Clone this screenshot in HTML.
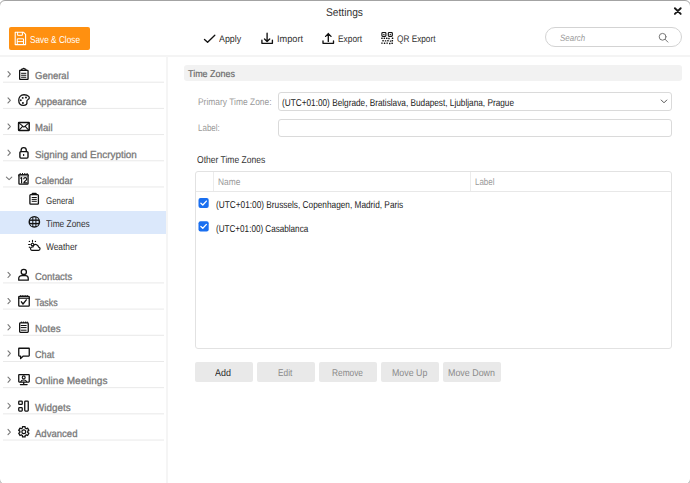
<!DOCTYPE html>
<html><head><meta charset="utf-8"><style>
html,body{margin:0;padding:0;}
body{width:690px;height:483px;position:relative;overflow:hidden;background:#fff;font-family:"Liberation Sans",sans-serif;text-rendering:geometricPrecision;}
.t{position:absolute;white-space:nowrap;line-height:1;transform-origin:0 0;}
.r{position:absolute;}
.ov{position:absolute;left:0;top:0;}
</style></head><body>
<div class="r" style="left:-1px;top:0px;width:692px;height:485px;border:1px solid #a3a3a3;border-radius:6px;box-sizing:border-box;"></div>
<div class="t" style="left:326.00px;top:8px;font-size:11.2px;color:#333;transform:scaleX(0.9143);">Settings</div>
<div class="r" style="left:9px;top:27px;width:81px;height:23px;background:#ff9010;border-radius:2px;"></div>
<div class="t" style="left:29.70px;top:36px;font-size:10px;color:#fff;transform:scaleX(0.8253);">Save &amp; Close</div>
<div class="t" style="left:219.30px;top:35px;font-size:9.6px;color:#333;transform:scaleX(0.9245);">Apply</div>
<div class="t" style="left:276.70px;top:35px;font-size:9.6px;color:#333;transform:scaleX(0.9593);">Import</div>
<div class="t" style="left:337.80px;top:35px;font-size:9.6px;color:#333;transform:scaleX(0.8722);">Export</div>
<div class="t" style="left:396.80px;top:35px;font-size:9.6px;color:#333;transform:scaleX(0.8591);">QR Export</div>
<div class="r" style="left:545px;top:27px;width:137px;height:20px;border:1px solid #d3d3d3;border-radius:10px;box-sizing:border-box;"></div>
<div class="t" style="left:560.00px;top:34px;font-size:9.2px;color:#9a9a9a;font-style:italic;transform:scaleX(0.8645);">Search</div>
<div class="r" style="left:0px;top:55px;width:690px;height:2px;background:#f4f4f4;"></div>
<div class="r" style="left:166px;top:56px;width:2px;height:427px;background:#f5f5f5;"></div>
<div class="t" style="left:35.40px;top:72px;font-size:10.2px;color:#777;-webkit-text-stroke:0.28px #777;transform:scaleX(0.9314);">General</div>
<div class="t" style="left:35.40px;top:98px;font-size:10.2px;color:#777;-webkit-text-stroke:0.28px #777;transform:scaleX(0.9380);">Appearance</div>
<div class="t" style="left:35.40px;top:124px;font-size:10.2px;color:#777;-webkit-text-stroke:0.28px #777;transform:scaleX(0.9411);">Mail</div>
<div class="t" style="left:35.40px;top:151px;font-size:10.2px;color:#777;-webkit-text-stroke:0.28px #777;transform:scaleX(0.9723);">Signing and Encryption</div>
<div class="t" style="left:35.40px;top:177px;font-size:10.2px;color:#777;-webkit-text-stroke:0.28px #777;transform:scaleX(0.9132);">Calendar</div>
<div class="t" style="left:46.40px;top:197px;font-size:9.8px;color:#333;transform:scaleX(0.8060);">General</div>
<div class="r" style="left:0px;top:211px;width:166px;height:23px;background:#dbe8fb;"></div>
<div class="t" style="left:46.40px;top:220px;font-size:9.8px;color:#333;transform:scaleX(0.8526);">Time Zones</div>
<div class="t" style="left:46.40px;top:243px;font-size:9.8px;color:#333;transform:scaleX(0.8519);">Weather</div>
<div class="t" style="left:35.40px;top:273px;font-size:10.2px;color:#777;-webkit-text-stroke:0.28px #777;transform:scaleX(0.9242);">Contacts</div>
<div class="t" style="left:35.40px;top:299px;font-size:10.2px;color:#777;-webkit-text-stroke:0.28px #777;transform:scaleX(0.8706);">Tasks</div>
<div class="t" style="left:35.40px;top:325px;font-size:10.2px;color:#777;-webkit-text-stroke:0.28px #777;transform:scaleX(0.9645);">Notes</div>
<div class="t" style="left:35.40px;top:351px;font-size:10.2px;color:#777;-webkit-text-stroke:0.28px #777;transform:scaleX(0.8958);">Chat</div>
<div class="t" style="left:35.40px;top:377px;font-size:10.2px;color:#777;-webkit-text-stroke:0.28px #777;transform:scaleX(0.9836);">Online Meetings</div>
<div class="t" style="left:35.40px;top:404px;font-size:10.2px;color:#777;-webkit-text-stroke:0.28px #777;transform:scaleX(0.9662);">Widgets</div>
<div class="t" style="left:35.40px;top:430px;font-size:10.2px;color:#777;-webkit-text-stroke:0.28px #777;transform:scaleX(0.9368);">Advanced</div>
<div class="r" style="left:184px;top:65px;width:498px;height:16px;background:#f2f2f2;border-radius:3px;"></div>
<div class="t" style="left:188.30px;top:70px;font-size:9.8px;color:#6a6a6a;-webkit-text-stroke:0.2px #6a6a6a;transform:scaleX(0.9149);">Time Zones</div>
<div class="t" style="left:197.70px;top:98px;font-size:9.6px;color:#9a9a9a;transform:scaleX(0.8788);">Primary Time Zone:</div>
<div class="r" style="left:278px;top:92px;width:394px;height:19px;border:1px solid #dadada;border-radius:3px;box-sizing:border-box;"></div>
<div class="t" style="left:281.70px;top:99px;font-size:10px;color:#222;transform:scaleX(0.8240);">(UTC+01:00) Belgrade, Bratislava, Budapest, Ljubljana, Prague</div>
<div class="t" style="left:197.70px;top:124px;font-size:9.6px;color:#9a9a9a;transform:scaleX(0.8334);">Label:</div>
<div class="r" style="left:278px;top:119px;width:394px;height:18px;border:1px solid #dadada;border-radius:3px;box-sizing:border-box;"></div>
<div class="t" style="left:197.10px;top:156px;font-size:10px;color:#333;transform:scaleX(0.8534);">Other Time Zones</div>
<div class="r" style="left:195px;top:171px;width:477px;height:178px;border:1px solid #e2e2e2;border-radius:3px;box-sizing:border-box;"></div>
<div class="r" style="left:196px;top:191px;width:475px;height:1px;background:#e8e8e8;"></div>
<div class="r" style="left:213px;top:172px;width:1px;height:19px;background:#ececec;"></div>
<div class="r" style="left:470px;top:172px;width:1px;height:19px;background:#ececec;"></div>
<div class="t" style="left:217.60px;top:178px;font-size:9.6px;color:#9a9a9a;transform:scaleX(0.8708);">Name</div>
<div class="t" style="left:474.60px;top:178px;font-size:9.6px;color:#9a9a9a;transform:scaleX(0.8302);">Label</div>
<div class="t" style="left:216.40px;top:201px;font-size:10px;color:#222;transform:scaleX(0.8265);">(UTC+01:00) Brussels, Copenhagen, Madrid, Paris</div>
<div class="t" style="left:216.40px;top:225px;font-size:10px;color:#222;transform:scaleX(0.8111);">(UTC+01:00) Casablanca</div>
<div class="r" style="left:195px;top:362px;width:58px;height:20px;background:#e9e9e9;border-radius:2px;"></div>
<div class="t" style="left:215.25px;top:369px;font-size:9.8px;color:#2a2a2a;transform:scaleX(0.9118);">Add</div>
<div class="r" style="left:257px;top:362px;width:58px;height:20px;background:#e9e9e9;border-radius:2px;"></div>
<div class="t" style="left:278.05px;top:369px;font-size:9.8px;color:#8a8a8a;transform:scaleX(0.8468);">Edit</div>
<div class="r" style="left:319px;top:362px;width:58px;height:20px;background:#e9e9e9;border-radius:2px;"></div>
<div class="t" style="left:331.70px;top:369px;font-size:9.8px;color:#8a8a8a;transform:scaleX(0.8495);">Remove</div>
<div class="r" style="left:381px;top:362px;width:58px;height:20px;background:#e9e9e9;border-radius:2px;"></div>
<div class="t" style="left:391.50px;top:369px;font-size:9.8px;color:#8a8a8a;transform:scaleX(0.9027);">Move Up</div>
<div class="r" style="left:443px;top:362px;width:58px;height:20px;background:#e9e9e9;border-radius:2px;"></div>
<div class="t" style="left:447.70px;top:369px;font-size:9.8px;color:#8a8a8a;transform:scaleX(0.9084);">Move Down</div>
<svg class="ov" width="690" height="483" viewBox="0 0 690 483" stroke-linecap="round" stroke-linejoin="round"><defs><clipPath id="globeclip"><circle cx="34.35" cy="221.9" r="4.9"/></clipPath></defs><path d="M674.9 8.2 L680.7 13.9 M680.7 8.2 L674.9 13.9" stroke="#1a1a1a" stroke-width="1.9" fill="none" /><path d="M15.2 32.3 H23.6 L25.6 34.3 V44.6 H15.2 Z" stroke="#fff" stroke-width="1.1" fill="none" /><path d="M17.6 32.3 V35.3 H22.4 V32.3" stroke="#fff" stroke-width="1.0" fill="none" /><path d="M17.3 44.6 V38.8 H23.5 V44.6 M17.3 41.6 H23.5" stroke="#fff" stroke-width="1.0" fill="none" /><path d="M204.5 39.4 L207.6 42.2 L214.8 35.3" stroke="#111" stroke-width="1.35" fill="none" /><path d="M267.1 33.2 V41.6 M264.5 38.9 L267.1 41.5 L269.7 38.9" stroke="#111" stroke-width="1.35" fill="none" /><path d="M261.9 40.2 V43.3 H272.4 V40.2" stroke="#111" stroke-width="1.35" fill="none" /><path d="M328.3 41.4 V33.4 M325.6 36.4 L328.3 33.6 L331 36.4" stroke="#111" stroke-width="1.35" fill="none" /><path d="M323 40.9 V43.3 H333.5 V40.9" stroke="#111" stroke-width="1.35" fill="none" /><rect x="381.9" y="32.5" width="4.0" height="3.9" rx="0.8" stroke="#111" stroke-width="1.15" fill="none"/><rect x="388.3" y="32.5" width="4.0" height="3.9" rx="0.8" stroke="#111" stroke-width="1.15" fill="none"/><rect x="383.3" y="33.9" width="1.2" height="1.1" rx="0" fill="#111" stroke="none"/><rect x="389.7" y="33.9" width="1.2" height="1.1" rx="0" fill="#111" stroke="none"/><rect x="381.2" y="37.6" width="1.5" height="1.4" rx="0.3" fill="#111" stroke="none"/><rect x="383.6" y="37.6" width="1.5" height="1.4" rx="0.3" fill="#111" stroke="none"/><rect x="386.0" y="37.6" width="1.5" height="1.4" rx="0.3" fill="#111" stroke="none"/><rect x="388.2" y="37.8" width="1.5" height="1.4" rx="0.3" fill="#111" stroke="none"/><rect x="391.8" y="37.6" width="1.5" height="1.4" rx="0.3" fill="#111" stroke="none"/><rect x="382.3" y="40.0" width="1.5" height="1.4" rx="0.3" fill="#111" stroke="none"/><rect x="384.8" y="40.2" width="1.5" height="1.4" rx="0.3" fill="#111" stroke="none"/><rect x="387.2" y="40.0" width="1.5" height="1.4" rx="0.3" fill="#111" stroke="none"/><rect x="389.8" y="40.4" width="1.5" height="1.4" rx="0.3" fill="#111" stroke="none"/><rect x="391.6" y="40.0" width="1.5" height="1.4" rx="0.3" fill="#111" stroke="none"/><rect x="381.2" y="42.4" width="1.5" height="1.4" rx="0.3" fill="#111" stroke="none"/><rect x="383.8" y="42.6" width="1.5" height="1.4" rx="0.3" fill="#111" stroke="none"/><rect x="386.4" y="42.4" width="1.5" height="1.4" rx="0.3" fill="#111" stroke="none"/><rect x="389.0" y="42.8" width="1.5" height="1.4" rx="0.3" fill="#111" stroke="none"/><rect x="391.4" y="42.6" width="1.5" height="1.4" rx="0.3" fill="#111" stroke="none"/><circle cx="662.6" cy="36.8" r="3.4" stroke="#777" stroke-width="1.0" fill="none"/><path d="M665.1 39.3 L667.9 42.1" stroke="#777" stroke-width="1.0" fill="none" /><path d="M8.0 71.6 L10.4 74.2 L8.0 76.8" stroke="#777" stroke-width="1.1" fill="none" /><rect x="3" y="81.70" width="161" height="1" fill="#e9e9e9"/><path d="M19.65 70.9 V78.9 Q19.65 79.35 20.1 79.35 H27.6 Q28.05 79.35 28.05 78.9 V70.9 Q28.05 70.45 27.6 70.45 H19.65 " stroke="#111" stroke-width="1.3" fill="none" /><path d="M21 70.2 L21.8 69.1 H22.6 Q23.7 67.7 24.8 69.1 H25.6 L26.3 70.2" stroke="#111" stroke-width="1.2" fill="none" /><path d="M21.5 73.3 H25.9 M21.5 75.25 H25.9 M21.5 77.25 H25.9" stroke="#111" stroke-width="1.0" fill="none" /><path d="M8.0 97.78999999999999 L10.4 100.39 L8.0 102.99" stroke="#777" stroke-width="1.1" fill="none" /><rect x="3" y="107.89" width="161" height="1" fill="#e9e9e9"/><path d="M24 94.75 C20.6 94.75 18.75 97.3 18.75 100.2 C18.75 103.4 20.8 105.35 23.4 105.35 C26 105.35 27.3 104.1 26.9 102.2 C26.6 100.9 26.9 100.1 28 99.5 C29.5 98.8 29.6 97.4 28.7 96.4 C27.6 95.3 25.9 94.75 24 94.75 Z" stroke="#111" stroke-width="1.3" fill="none" /><circle cx="22.7" cy="97.9" r="0.95" fill="#111" stroke="none"/><circle cx="26" cy="97.5" r="0.95" fill="#111" stroke="none"/><circle cx="20.8" cy="100.2" r="0.95" fill="#111" stroke="none"/><circle cx="22.9" cy="103" r="0.95" fill="#111" stroke="none"/><path d="M8.0 123.98 L10.4 126.58000000000001 L8.0 129.18" stroke="#777" stroke-width="1.1" fill="none" /><rect x="3" y="134.08" width="161" height="1" fill="#e9e9e9"/><rect x="18.6" y="122.5" width="10.6" height="7.9" rx="0.4" stroke="#111" stroke-width="1.5" fill="none"/><path d="M18.9 122.8 L23.9 127.1 L28.9 122.8 M19.1 130.2 L22.6 126.4 M28.7 130.2 L25.2 126.4" stroke="#111" stroke-width="1.1" fill="none" /><path d="M8.0 150.17000000000002 L10.4 152.77 L8.0 155.37" stroke="#777" stroke-width="1.1" fill="none" /><rect x="3" y="160.27" width="161" height="1" fill="#e9e9e9"/><rect x="19.9" y="151.6" width="8.1" height="6.5" rx="1.0" stroke="#111" stroke-width="1.4" fill="none"/><path d="M21.1 151.5 V150.3 C21.1 146.7 26.3 146.7 26.3 150.3 V151.5" stroke="#111" stroke-width="1.3" fill="none" /><rect x="23.1" y="154" width="1.1" height="2.0" rx="0" fill="#111" stroke="none"/><path d="M6.4 177.2 L9.1 179.6 L11.8 177.2" stroke="#777" stroke-width="1.1" fill="none" /><rect x="3" y="186.46" width="161" height="1" fill="#e9e9e9"/><rect x="18.95" y="174.85" width="9.1" height="9.3" rx="0.7" stroke="#111" stroke-width="1.3" fill="none"/><rect x="18.3" y="174.2" width="10.4" height="2.0" rx="0.5" fill="#111" stroke="none"/><rect x="19.7" y="173.0" width="1.0" height="1.6" rx="0" fill="#111" stroke="none"/><rect x="22.0" y="173.0" width="1.0" height="1.6" rx="0" fill="#111" stroke="none"/><rect x="24.3" y="173.0" width="1.0" height="1.6" rx="0" fill="#111" stroke="none"/><rect x="26.6" y="173.0" width="1.0" height="1.6" rx="0" fill="#111" stroke="none"/><rect x="19.6" y="175.3" width="8.0" height="0.6" rx="0" fill="#bbb" stroke="none"/><path d="M20.7 178.2 L21.6 177.5 V182.9" stroke="#111" stroke-width="1.15" fill="none" /><path d="M23.7 178.8 C23.9 177.3 26.7 177.2 26.7 179.0 C26.7 180.6 23.8 181.4 23.8 182.9 H26.9" stroke="#111" stroke-width="1.15" fill="none" /><path d="M29.9 195.4 Q29.9 194.55 30.7 194.55 H37.6 Q38.4 194.55 38.4 195.4 V203.4 Q38.4 204.1 37.6 204.1 H30.7 Q29.9 204.1 29.9 203.4 Z" stroke="#111" stroke-width="1.3" fill="none" /><path d="M32.2 194.5 V193.9 Q32.2 193.45 32.7 193.45 H35.8 Q36.2 193.45 36.2 193.9 V194.5" stroke="#111" stroke-width="1.3" fill="none" /><path d="M32.1 197.5 H36.4 M32.1 199.4 H36.4 M32.1 201.3 H36.4" stroke="#111" stroke-width="1.0" fill="none" /><circle cx="34.35" cy="221.9" r="5.85" fill="#111" stroke="none"/><rect x="30.1" y="217.4" width="2.1999999999999957" height="2.0999999999999943" fill="#dbe8fb" clip-path="url(#globeclip)"/><rect x="30.1" y="220.9" width="2.1999999999999957" height="2.0" fill="#dbe8fb" clip-path="url(#globeclip)"/><rect x="30.1" y="224.3" width="2.1999999999999957" height="2.0999999999999943" fill="#dbe8fb" clip-path="url(#globeclip)"/><rect x="33.3" y="217.4" width="2.1000000000000014" height="2.0999999999999943" fill="#dbe8fb" clip-path="url(#globeclip)"/><rect x="33.3" y="220.9" width="2.1000000000000014" height="2.0" fill="#dbe8fb" clip-path="url(#globeclip)"/><rect x="33.3" y="224.3" width="2.1000000000000014" height="2.0999999999999943" fill="#dbe8fb" clip-path="url(#globeclip)"/><rect x="36.4" y="217.4" width="2.200000000000003" height="2.0999999999999943" fill="#dbe8fb" clip-path="url(#globeclip)"/><rect x="36.4" y="220.9" width="2.200000000000003" height="2.0" fill="#dbe8fb" clip-path="url(#globeclip)"/><rect x="36.4" y="224.3" width="2.200000000000003" height="2.0999999999999943" fill="#dbe8fb" clip-path="url(#globeclip)"/><path d="M31.8 250.3 H38.6 C40.4 250.3 40.6 247.4 38.6 247.2 C38.2 245.2 36.2 244 34.4 244.7 C33.6 245.2 33.1 246 33 246.8 C31.2 246.7 30.4 247.9 30.5 248.8 C30.6 249.7 31.1 250.3 31.8 250.3 Z" stroke="#111" stroke-width="1.25" fill="none" /><circle cx="32.5" cy="244.5" r="1.3" stroke="#111" stroke-width="1.1" fill="none"/><path d="M32.5 240.4 V241.9 M28.6 244.5 H30.2" stroke="#111" stroke-width="1.1" fill="none" /><circle cx="29.4" cy="241.4" r="0.7" fill="#111" stroke="none"/><circle cx="35.4" cy="241.4" r="0.7" fill="#111" stroke="none"/><circle cx="29.4" cy="247.3" r="0.7" fill="#111" stroke="none"/><path d="M8.0 272.29999999999995 L10.4 274.9 L8.0 277.5" stroke="#777" stroke-width="1.1" fill="none" /><rect x="3" y="282.40" width="161" height="1" fill="#e9e9e9"/><circle cx="23.8" cy="271.9" r="2.6" stroke="#111" stroke-width="1.3" fill="none"/><path d="M18.75 280.15 V278.6 C18.75 276.6 20.3 275.6 22 275.6 H25.6 C27.3 275.6 28.25 276.6 28.25 278.6 V280.15 Z" stroke="#111" stroke-width="1.3" fill="none" /><path d="M8.0 298.49 L10.4 301.09 L8.0 303.69" stroke="#777" stroke-width="1.1" fill="none" /><rect x="3" y="308.59" width="161" height="1" fill="#e9e9e9"/><rect x="18.75" y="296.5" width="10.5" height="9.65" rx="0.6" stroke="#111" stroke-width="1.3" fill="none"/><path d="M18.75 298.3 H29.25" stroke="#111" stroke-width="1.0" fill="none" /><rect x="20.3" y="295.0" width="1.0" height="1.5" rx="0" fill="#111" stroke="none"/><rect x="22.4" y="295.0" width="1.0" height="1.5" rx="0" fill="#111" stroke="none"/><rect x="24.6" y="295.0" width="1.0" height="1.5" rx="0" fill="#111" stroke="none"/><rect x="26.7" y="295.0" width="1.0" height="1.5" rx="0" fill="#111" stroke="none"/><path d="M21.4 301.8 L23.0 304.0 L26.3 299.9" stroke="#111" stroke-width="1.35" fill="none" /><path d="M8.0 324.67999999999995 L10.4 327.28 L8.0 329.88" stroke="#777" stroke-width="1.1" fill="none" /><rect x="3" y="334.78" width="161" height="1" fill="#e9e9e9"/><rect x="19.65" y="322.9" width="8.6" height="9.45" rx="0.8" stroke="#111" stroke-width="1.3" fill="none"/><circle cx="21.4" cy="322.2" r="0.75" fill="#111" stroke="none"/><circle cx="23.4" cy="322.2" r="0.75" fill="#111" stroke="none"/><circle cx="25.4" cy="322.2" r="0.75" fill="#111" stroke="none"/><circle cx="27.2" cy="322.2" r="0.75" fill="#111" stroke="none"/><path d="M21.2 325.5 H26.2 M21.2 327.6 H26.2 M21.2 330.2 H26.2" stroke="#111" stroke-width="1.0" fill="none" /><path d="M8.0 350.87 L10.4 353.46999999999997 L8.0 356.07" stroke="#777" stroke-width="1.1" fill="none" /><rect x="3" y="360.97" width="161" height="1" fill="#e9e9e9"/><path d="M18.75 348.4 Q18.75 348.25 19 348.25 H29 Q29.25 348.25 29.25 348.5 V355.6 Q29.25 356.05 28.8 356.05 H23.3 L20.6 358.6 V356.05 H19.2 Q18.75 356.05 18.75 355.6 Z" stroke="#111" stroke-width="1.3" fill="none" /><path d="M8.0 377.05999999999995 L10.4 379.65999999999997 L8.0 382.26" stroke="#777" stroke-width="1.1" fill="none" /><rect x="3" y="387.16" width="161" height="1" fill="#e9e9e9"/><rect x="18.75" y="374.6" width="10.5" height="7.5" rx="0.5" stroke="#111" stroke-width="1.3" fill="none"/><circle cx="23.7" cy="377.4" r="1.45" stroke="#111" stroke-width="1.15" fill="none"/><path d="M20.9 381.6 C21.3 379.5 26.1 379.5 26.5 381.6" stroke="#111" stroke-width="1.15" fill="none" /><path d="M23.7 382.3 V384.4 M20.4 384.6 H27.1" stroke="#111" stroke-width="1.3" fill="none" /><path d="M8.0 403.25 L10.4 405.85 L8.0 408.45000000000005" stroke="#777" stroke-width="1.1" fill="none" /><rect x="3" y="413.35" width="161" height="1" fill="#e9e9e9"/><rect x="18.75" y="401.05" width="3.5" height="3.4" rx="0.8" stroke="#111" stroke-width="1.3" fill="none"/><rect x="18.75" y="407.65" width="3.5" height="3.5" rx="0.8" stroke="#111" stroke-width="1.3" fill="none"/><rect x="24.75" y="401.05" width="3.5" height="10.1" rx="0.8" stroke="#111" stroke-width="1.3" fill="none"/><path d="M8.0 429.43999999999994 L10.4 432.03999999999996 L8.0 434.64" stroke="#777" stroke-width="1.1" fill="none" /><rect x="3" y="439.54" width="161" height="1" fill="#e9e9e9"/><path d="M22.52 426.66 L25.08 426.66 L25.17 428.04 L26.37 428.74 L27.61 428.12 L28.89 430.34 L27.74 431.11 L27.74 432.49 L28.89 433.26 L27.61 435.48 L26.37 434.86 L25.17 435.56 L25.08 436.94 L22.52 436.94 L22.43 435.56 L21.23 434.86 L19.99 435.48 L18.71 433.26 L19.86 432.49 L19.86 431.11 L18.71 430.34 L19.99 428.12 L21.23 428.74 L22.43 428.04 Z" stroke="#111" stroke-width="1.3" fill="none" /><circle cx="23.8" cy="431.8" r="1.9" stroke="#111" stroke-width="1.2" fill="none"/><path d="M661.2 100 L664 102.8 L666.8 100" stroke="#555" stroke-width="1.0" fill="none" /><rect x="198.5" y="197.9" width="10.2" height="10.2" rx="2" fill="#1a6ff0" stroke="none"/><path d="M200.9 203.20000000000002 L202.8 205.0 L206.4 201.1" stroke="#fff" stroke-width="1.3" fill="none" /><rect x="198.5" y="221.2" width="10.2" height="10.2" rx="2" fill="#1a6ff0" stroke="none"/><path d="M200.9 226.5 L202.8 228.29999999999998 L206.4 224.39999999999998" stroke="#fff" stroke-width="1.3" fill="none" /></svg>
</body></html>
